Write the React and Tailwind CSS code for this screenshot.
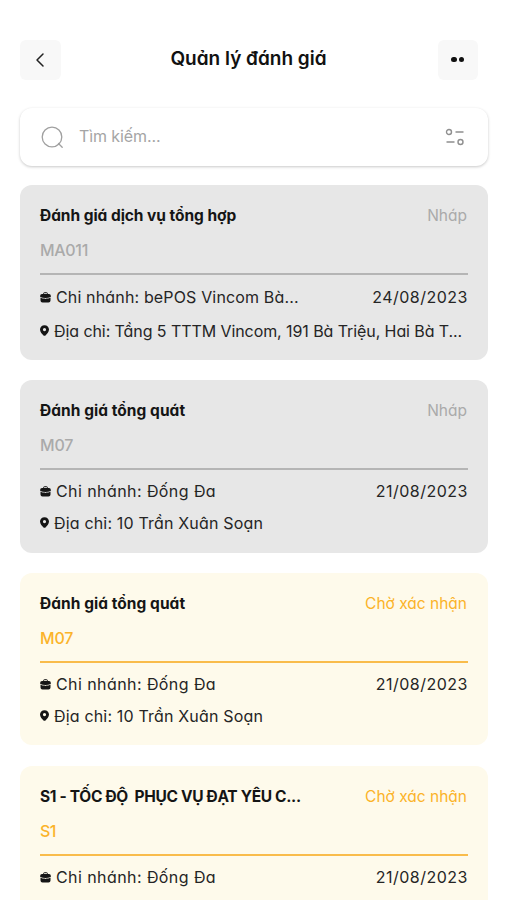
import React from 'react';

const reviews = [
  {
    title: 'Đánh giá dịch vụ tổng hợp',
    code: 'MA011',
    status: 'draft',
    branch: 'bePOS Vincom Bà...',
    date: '24/08/2023',
    address: 'Tầng 5 TTTM Vincom, 191 Bà Triệu, Hai Bà T...',
    titleClass: 'tracking-[-0.05px]',
    codeClass: 'tracking-[-0.3px]',
    branchRowClass: 'mt-[10px]',
    branchClass: 'tracking-[0.15px]',
    addressClass: 'tracking-[-0.08px]',
    rowClass: 'h-[34px]',
    cardClass: 'h-[175px] mb-5',
  },
  {
    title: 'Đánh giá tổng quát',
    code: 'M07',
    status: 'draft',
    branch: 'Đống Đa',
    date: '21/08/2023',
    address: '10 Trần Xuân Soạn',
    titleClass: 'tracking-[0.04px]',
    codeClass: 'tracking-[-0.2px]',
    branchRowClass: 'mt-[9px]',
    branchClass: 'tracking-[0.42px]',
    addressClass: 'tracking-[0.17px]',
    rowClass: 'h-8',
    cardClass: 'h-[173px] mb-5',
  },
  {
    title: 'Đánh giá tổng quát',
    code: 'M07',
    status: 'pending',
    branch: 'Đống Đa',
    date: '21/08/2023',
    address: '10 Trần Xuân Soạn',
    titleClass: 'tracking-[0.04px]',
    codeClass: 'tracking-[-0.2px]',
    branchRowClass: 'mt-[9px]',
    branchClass: 'tracking-[0.42px]',
    addressClass: 'tracking-[0.17px]',
    rowClass: 'h-8',
    cardClass: 'h-[172px] mb-[21px]',
  },
  {
    title: 'S1 - TỐC ĐỘ\u00a0 PHỤC VỤ ĐẠT YÊU C...',
    code: 'S1',
    status: 'pending',
    branch: 'Đống Đa',
    date: '21/08/2023',
    titleClass: 'tracking-[-0.33px]',
    codeClass: 'tracking-[-0.5px]',
    branchRowClass: 'mt-[9px]',
    branchClass: 'tracking-[0.42px]',
    cardClass: 'h-[172px]',
  },
];

const statuses = {
  draft: {
    label: 'Nháp',
    card: 'bg-[#e7e7e7]',
    text: 'text-[#aaaaaa]',
    line: 'bg-[#b5b5b5]',
  },
  pending: {
    label: 'Chờ xác nhận',
    card: 'bg-[#fefaeb]',
    text: 'text-[#fbb329]',
    line: 'bg-[#f9bc4b]',
  },
};

const BriefcaseIcon = () => (
  <svg className="w-[11px] h-[11px] mt-px shrink-0" viewBox="0 0 11 11" fill="none">
    <path d="M3.6 2.4V1.500q0-.8.8-.8h2.200q.8 0 .8.8v.9" stroke="#151515" strokeWidth="1" />
    <path d="M2 2h7q1.800 0 1.800 1.800v1.100Q8.500 6 5.500 6T.2 4.900V3.800Q.2 2 2 2z" fill="#151515" />
    <path d="M.5 5.700q2.300.9 4.100.9.900.8 1.800 0Q8.200 6.600 10.500 5.700v2.800q0 2-2 2h-6q-2 0-2-2z" fill="#151515" />
  </svg>
);

const PinIcon = () => (
  <svg className="w-[9px] h-[11px] shrink-0" viewBox="0 0 9 11">
    <path
      d="M4.500.2C1.900.2 0 2.100 0 4.600c0 2.600 2.200 4.500 3.500 5.800q1 .8 2 0C6.800 9.100 9 7.200 9 4.600 9 2.100 7.100.2 4.500.2zm0 2.800a1.600 1.600 0 1 1 0 3.200 1.600 1.600 0 0 1 0-3.200z"
      fill="#151515"
      fillRule="evenodd"
    />
  </svg>
);

const Header = () => (
  <header className="flex items-center justify-between shrink-0 h-10 pl-5 pr-[29px] mt-10">
    <button className="flex items-center justify-center w-[41px] h-10 pr-[2px] pb-px rounded-md bg-[#f8f8f8]">
      <svg className="w-4 h-4" viewBox="0 0 16 16" fill="none">
        <path d="M11 2 5 8l6 6" stroke="#222" strokeWidth="1.500" strokeLinecap="round" strokeLinejoin="round" />
      </svg>
    </button>
    <h1 className="pb-[2px] pr-[2px] text-[19px] leading-6 font-semibold text-[#111] whitespace-nowrap">
      Quản lý đánh giá
    </h1>
    <button className="flex items-center justify-center gap-[2px] w-10 h-10 pr-px pb-px rounded-md bg-[#f8f8f8]">
      <span className="w-[5.5px] h-[5.5px] rounded-full bg-[#111]"></span>
      <span className="w-[5.5px] h-[5.5px] rounded-full bg-[#111]"></span>
    </button>
  </header>
);

const SearchBar = () => (
  <div className="flex items-center shrink-0 h-[58px] ml-5 mr-[19px] mt-7 pl-[21px] pr-[23px] rounded-xl bg-white shadow-[0_1px_3px_rgba(0,0,0,0.22)]">
    <svg className="w-[22px] h-[22px]" viewBox="0 0 22 22" fill="none" stroke="#a0a0a0" strokeWidth="1.300">
      <circle cx="11" cy="11" r="9.800" />
      <path d="m17.500 17.500 3.700 3.700" strokeLinecap="round" />
    </svg>
    <span className="flex-1 ml-4 pb-[2px] text-base text-[#a5a5a5] tracking-[-0.1px]">Tìm kiếm...</span>
    <svg className="w-5 h-[18px]" viewBox="0 0 20 18" fill="none" stroke="#8f8f8f" strokeWidth="1.400">
      <circle cx="4" cy="4" r="2.500" />
      <path d="M10.500 4h8M1.500 14h8" />
      <circle cx="15.500" cy="14" r="2.500" />
    </svg>
  </div>
);

const ReviewCard = ({ review }) => {
  const status = statuses[review.status];

  return (
    <article className={`shrink-0 px-5 pt-[19px] rounded-xl ${status.card} ${review.cardClass}`}>
      <div className="flex items-center justify-between h-6 whitespace-nowrap">
        <h2 className={`text-[15.5px] font-bold text-[#151515] ${review.titleClass}`}>{review.title}</h2>
        <span className={`mr-px text-[15.5px] ${status.text}`}>{status.label}</span>
      </div>
      <p className={`mt-[10px] text-base leading-6 font-medium ${status.text} ${review.codeClass}`}>{review.code}</p>
      <div className={`h-[1.5px] mt-[11px] ${status.line}`}></div>
      <div className={`flex items-center h-6 text-base text-[#252525] whitespace-nowrap ${review.branchRowClass}`}>
        <BriefcaseIcon />
        <span className={`ml-[5px] ${review.branchClass}`}>Chi nhánh: {review.branch}</span>
        <time className="ml-auto tracking-[0.5px]">{review.date}</time>
      </div>
      {review.address && (
        <div className={`flex items-end text-base leading-6 text-[#252525] whitespace-nowrap ${review.rowClass}`}>
          <span className="flex items-center">
            <PinIcon />
            <span className={`ml-[5px] ${review.addressClass}`}>Địa chỉ: {review.address}</span>
          </span>
        </div>
      )}
    </article>
  );
};

const App = () => {
  return (
    <div className="flex flex-col w-full max-w-[507px] h-[900px] overflow-hidden bg-white font-['Inter','Open_Sans',sans-serif] [font-feature-settings:'cv11']">
      <Header />
      <SearchBar />
      <main className="flex flex-col pl-5 pr-[19px] mt-[19px]">
        {reviews.map((review, index) => (
          <ReviewCard key={index} review={review} />
        ))}
      </main>
    </div>
  );
};

export default App;
